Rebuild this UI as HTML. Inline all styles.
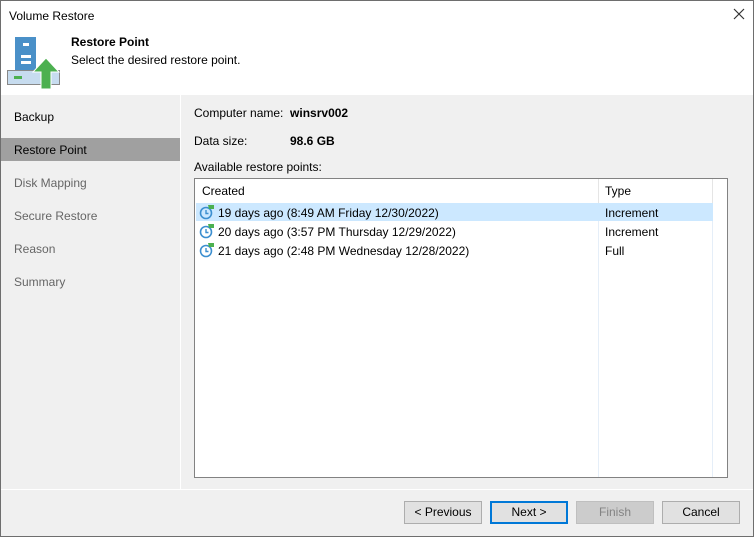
<!DOCTYPE html>
<html><head><style>
*{margin:0;padding:0;box-sizing:border-box}
body{width:754px;height:537px;overflow:hidden;font-family:"Liberation Sans",sans-serif;font-size:12px;color:#000;background:#f0f0f0;position:relative}
.a{position:absolute;white-space:nowrap}
.btn{position:absolute;top:501px;width:78px;height:23px;border:1px solid #adadad;background:#e1e1e1;text-align:center;line-height:21px}
.nav{position:absolute;left:14px}
</style></head><body>
<div class="a" style="left:0;top:0;width:754px;height:95px;background:#fff"></div>
<div class="a" style="left:9px;top:9px">Volume Restore</div>
<svg class="a" style="left:733px;top:8px" width="12" height="12"><path d="M1 1L11 11M11 1L1 11" stroke="#333" stroke-width="1.2"/></svg>
<svg class="a" style="left:6px;top:36px" width="56" height="54">
<rect x="9" y="1" width="21" height="44" fill="#4a90c8"/>
<rect x="17" y="7" width="6" height="3" fill="#fff"/>
<rect x="15" y="19" width="10" height="3" fill="#fff"/>
<rect x="15" y="25" width="10" height="3" fill="#fff"/>
<rect x="1.5" y="34.5" width="52" height="14" fill="#c7dcef" stroke="#888"/>
<rect x="8" y="40" width="8" height="3" fill="#4cb050"/>
<path d="M40 22L27 36H35V53H45V36H53Z" fill="#4cb050" stroke="#fff" stroke-width="1"/>
</svg>
<div class="a" style="left:71px;top:35px;font-weight:bold">Restore Point</div>
<div class="a" style="left:71px;top:53px">Select the desired restore point.</div>
<div class="a" style="left:180px;top:95px;width:1px;height:394px;background:#fff"></div>
<div class="a" style="left:0;top:489px;width:754px;height:1px;background:#fff"></div>
<div class="a" style="left:0;top:138px;width:180px;height:23px;background:#a0a0a0"></div>
<div class="nav a" style="top:110px">Backup</div>
<div class="nav a" style="top:143px">Restore Point</div>
<div class="nav a" style="top:176px;color:#666">Disk Mapping</div>
<div class="nav a" style="top:209px;color:#666">Secure Restore</div>
<div class="nav a" style="top:242px;color:#666">Reason</div>
<div class="nav a" style="top:275px;color:#666">Summary</div>
<div class="a" style="left:194px;top:106px">Computer name:&nbsp; <b>winsrv002</b></div>
<div class="a" style="left:194px;top:134px">Data size:</div>
<div class="a" style="left:290px;top:134px;font-weight:bold">98.6 GB</div>
<div class="a" style="left:194px;top:160px">Available restore points:</div>
<div class="a" style="left:194px;top:178px;width:534px;height:300px;background:#fff;border:1px solid #828282"></div>
<div class="a" style="left:598px;top:179px;width:1px;height:298px;background:#e5eef8"></div>
<div class="a" style="left:712px;top:179px;width:1px;height:298px;background:#e5eef8"></div>
<div class="a" style="left:598px;top:179px;width:1px;height:24px;background:#e5e5e5"></div>
<div class="a" style="left:712px;top:179px;width:1px;height:24px;background:#e5e5e5"></div>
<div class="a" style="left:202px;top:184px">Created</div>
<div class="a" style="left:605px;top:184px">Type</div>
<div class="a" style="left:196px;top:203px;width:517px;height:18px;background:#cce8ff"></div>
<svg class="a" style="left:199px;top:203px" width="18" height="60">
<defs><g id="c"><circle cx="7" cy="10" r="5.5" fill="none" stroke="#3c8fd0" stroke-width="1.6"/><path d="M7 7V10.5H9.5" fill="none" stroke="#3c8fd0" stroke-width="1.4"/><path d="M9 2H15V6H10Z" fill="#4cb050"/></g></defs>
<use href="#c" y="0"/><use href="#c" y="19"/><use href="#c" y="38"/></svg>
<div class="a" style="left:218px;top:206px">19 days ago (8:49 AM Friday 12/30/2022)</div>
<div class="a" style="left:218px;top:225px">20 days ago (3:57 PM Thursday 12/29/2022)</div>
<div class="a" style="left:218px;top:244px">21 days ago (2:48 PM Wednesday 12/28/2022)</div>
<div class="a" style="left:605px;top:206px">Increment</div>
<div class="a" style="left:605px;top:225px">Increment</div>
<div class="a" style="left:605px;top:244px">Full</div>
<div class="btn" style="left:404px">&lt; Previous</div>
<div class="btn" style="left:490px;border:2px solid #0078d7;line-height:19px">Next &gt;</div>
<div class="btn" style="left:576px;background:#ccc;border-color:#bfbfbf;color:#838383">Finish</div>
<div class="btn" style="left:662px">Cancel</div>
<div class="a" style="left:0;top:0;width:754px;height:537px;border:1px solid #6e6e6e"></div>
</body></html>
